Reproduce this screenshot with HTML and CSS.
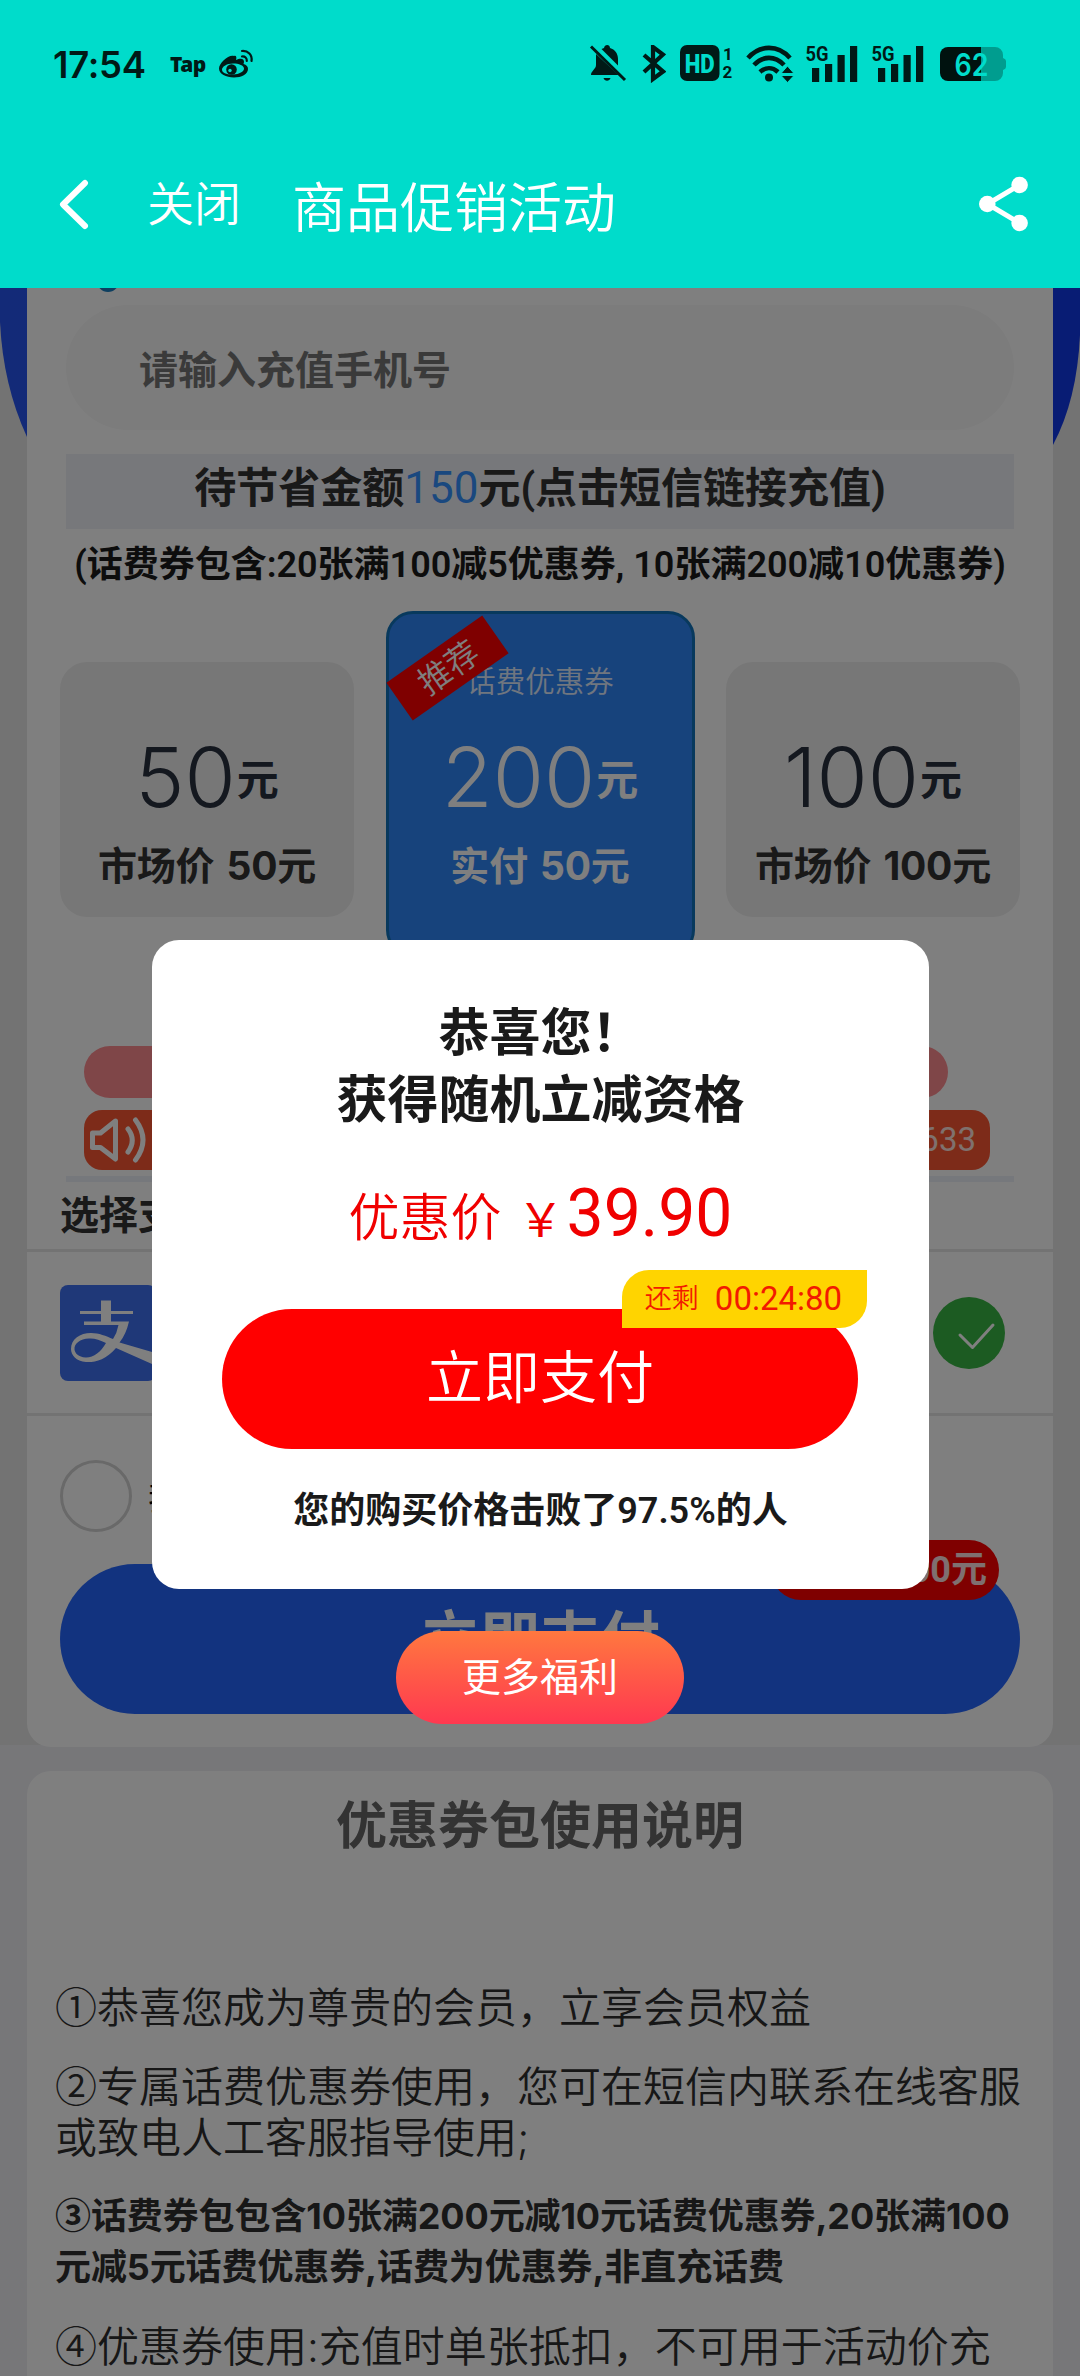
FILE: index.html
```html
<!DOCTYPE html>
<html lang="zh-CN">
<head>
<meta charset="utf-8">
<title>商品促销活动</title>
<link rel="stylesheet" href="styles.css">
</head>
<body>
<header class="top">
  <div class="status">
    <span class="clock">17:54</span>
    <span class="tap">Tap</span>
    <svg class="weibo" width="36" height="30" viewBox="217 50 36 30">
      <path fill="#001a17" fill-rule="evenodd" d="M233 57c2-1 3 1 2 4 4-2 8-2 8 2l-.5 2c3 1 4.500 2.500 4.500 5 0 5-6.500 8.500-14 8.500-8 0-15-3.500-15-9C218 64 228 55 233 57zM232 64.500c-6 0-11 3-11 6.200 0 3 4.500 5 11 4.800 6.500-.2 11-2.800 11-6 0-3-5-5-11-5z"/>
      <circle cx="230.500" cy="70.500" r="5.300" fill="#001a17"/><circle cx="229" cy="71.500" r="1.700" fill="#00dccb"/>
      <path fill="none" stroke="#001a17" stroke-width="2.200" stroke-linecap="round" d="M241 52c6-.5 10.500 4 9.500 10M241 57.500c3-.3 5 1.500 4.800 4.500"/>
    </svg>
    <svg class="icon bell" width="38" height="38" viewBox="588 46 38 38" fill="#001a17">
      <path d="M603 49c.5-4 6-4 6 0 5 1.500 8 5.500 8 11v6.500L600.500 50zM595 57v9c0 4-5 6-5 10h27.500L595 55z"/><path d="M602.500 79h7c-1 3.500-6 3.500-7 0z"/>
      <path stroke="#001a17" stroke-width="3" d="M590 47.500l34 33.500"/>
    </svg>
    <svg class="icon bt" width="24" height="38" viewBox="641 46 24 38" fill="none" stroke="#001a17" stroke-width="4.200">
      <path d="M643 56l19 16.500-10 7.500V48l10 7.500L643 73"/>
    </svg>
    <svg class="icon hd" width="54" height="38" viewBox="678 46 54 38">
      <rect x="679" y="46" width="39.500" height="36" rx="7" fill="#001a17"/>
      <text x="698.700" y="73.500" text-anchor="middle" class="t-hd" textLength="30" lengthAdjust="spacingAndGlyphs">HD</text>
      <text x="722" y="61" class="t-sim">1</text><text x="721.500" y="79" class="t-sim">2</text>
    </svg>
    <svg class="icon wifi" width="48" height="38" viewBox="745 46 48 38">
      <g fill="none" stroke="#001a17" stroke-width="4.600"><path d="M747 59c12-13.500 30-13.500 42 0M753 66c9-9.500 21-9.500 30 0M759 73c5.500-5 12.500-5 18 0"/></g>
      <circle cx="768" cy="78.500" r="4" fill="#001a17"/>
      <path d="M780 74.500h13l-6.500-7.500zM780 76.500h13l-6.500 7z" fill="#001a17" stroke="#00dccb" stroke-width="1"/>
    </svg>
    <svg class="icon sig" width="53" height="46" viewBox="804 41 53 46" fill="#001a17">
      <text x="804.500" y="60.500" class="t-5g" textLength="23" lengthAdjust="spacingAndGlyphs">5G</text>
      <path d="M811 68h7.200v14H811zM824 64h7.200v18H824zM836.500 55h7.200v27h-7.200zM849 46h7.200v36H849z"/>
    </svg>
    <svg class="icon sig2" width="53" height="46" viewBox="804 41 53 46" fill="#001a17">
      <text x="804.500" y="60.500" class="t-5g" textLength="23" lengthAdjust="spacingAndGlyphs">5G</text>
      <path d="M811 68h7.200v14H811zM824 64h7.200v18H824zM836.500 55h7.200v27h-7.200zM849 46h7.200v36H849z"/>
    </svg>
    <svg class="icon bat" width="67" height="38" viewBox="939 46 67 38">
      <path d="M980 48h14a8 8 0 0 1 8 8v3q3 1 3 3v6q0 2-3 3v3a8 8 0 0 1-8 8h-14z" fill="#009d8f"/>
      <path d="M947 48h33v34h-33a8 8 0 0 1-8-8V56a8 8 0 0 1 8-8z" fill="#00120f"/>
      <text x="970.500" y="77" text-anchor="middle" class="t-bat" textLength="34" lengthAdjust="spacingAndGlyphs">62</text>
    </svg>
  </div>
  <nav class="nav">
    <svg class="back" width="32" height="52" viewBox="58 178 32 52"><path d="M85 183L63 204.500 85 226" fill="none" stroke="#fff" stroke-width="6" stroke-linecap="round" stroke-linejoin="round"/></svg>
    <span class="close">关闭</span>
    <h1 class="nav-title">商品促销活动</h1>
    <svg class="share" width="52" height="56" viewBox="976 176 52 56" fill="#fff"><path d="M1018.600 185L986.500 204l32.100 19" fill="none" stroke="#fff" stroke-width="5"/><circle cx="986.300" cy="204" r="8.300"/><circle cx="1018.600" cy="185" r="8.300"/><circle cx="1018.600" cy="223" r="8.300"/></svg>
  </nav>
</header>

<main class="page">
  <svg class="hero" width="1080" height="170" viewBox="0 288 1080 170">
    <defs><linearGradient id="hero" x2="1"><stop offset="0" stop-color="#2755f0"/><stop offset="1" stop-color="#1038e8"/></linearGradient></defs>
    <path fill="url(#hero)" d="M0 288V322Q3 385 27 437L1053 445Q1077 400 1080 335V288z"/>
  </svg>
  <section class="card order">
    <i class="dot"></i>
    <div class="phone">请输入充值手机号</div>
    <div class="notice">待节省金额<em>150</em>元(点击短信链接充值)</div>
    <p class="note">(话费券包含:20张满100减5优惠券, 10张满200减10优惠券)</p>
    <div class="plans">
      <div class="plan side"><div class="amount"><b>50</b><span>元</span></div><div class="price">市场价 50元</div></div>
      <div class="plan main">
        <span class="ribbon">推荐</span>
        <div class="label">话费优惠券</div>
        <div class="amount"><b>200</b><span>元</span></div><div class="price">实付 50元</div>
      </div>
      <div class="plan side"><div class="amount"><b>100</b><span>元</span></div><div class="price">市场价 100元</div></div>
    </div>
    <div class="pink"></div>
    <div class="ticker">
      <svg width="60" height="48" viewBox="88 1115 60 48" fill="none" stroke="#fff" stroke-width="5" stroke-linecap="round" stroke-linejoin="round"><path d="M92.500 1132v14.500h8L115.500 1158v-38L100.500 1132zM128 1128q8.500 11 0 23M135.500 1119q15 20 0 40"/></svg>
      <span>633</span>
    </div>
    <div class="strip"></div>
    <h2 class="pay-head">选择支付方式</h2>
    <div class="pay-row">
      <svg width="96" height="96" viewBox="0 0 96 96"><rect width="96" height="96" rx="8" fill="#3e70f0"/>
        <path fill="#fff" d="M41 15.500h10V26h22v3H51v7.500h18q-3 13-9.500 21L92 67v12L56 63C46 75 35 77.500 26 77c-10-.5-15-7-15-13 0-10 9-16 20-16 8 0 15 3 22 6q4-6 5.500-14H24v-3.500h17V29H20v-3h21zM46 58c-6-3-12-5-17-4.500-9 .5-15 5-14.500 11 .5 4 4 7.500 11 8C33 73 41 67 46 58z"/></svg>
      <svg class="checked" width="72" height="72" viewBox="0 0 72 72"><circle cx="36" cy="36" r="36" fill="#38b644"/><path d="M27 38l12.500 12.500L60 28" fill="none" stroke="#fff" stroke-width="3" stroke-linecap="round" stroke-linejoin="round"/></svg>
    </div>
    <div class="agree"><i></i><span>我已阅读并同意</span></div>
    <div class="pay">立即支付<span class="badge">实付50.00元</span></div>
  </section>

  <section class="card guide">
    <h2>优惠券包使用说明</h2>
    <p><i>①</i>恭喜您成为尊贵的会员，立享会员权益</p>
    <p><i>②</i>专属话费优惠券使用，您可在短信内联系在线客服<br>或致电人工客服指导使用;</p>
    <p class="strong"><i>③</i>话费券包包含10张满200元减10元话费优惠券,20张满100<br>元减5元话费优惠券,话费为优惠券,非直充话费</p>
    <p><i>④</i>优惠券使用:充值时单张抵扣，不可用于活动价充</p>
  </section>

  <div class="mask">
    <div class="dialog">
      <h3>恭喜您！<br>获得随机立减资格</h3>
      <div class="deal"><span>优惠价</span><i>￥</i><b>39.90</b></div>
      <div class="go">立即支付<span class="timer"><small>还剩</small>00:24:80</span></div>
      <p>您的购买价格击败了97.5%的人</p>
    </div>
    <div class="more">更多福利</div>
  </div>
</main>
</body>
</html>
```
FILE: styles.css
```css
* { box-sizing: border-box; margin: 0; padding: 0; }
body {
  width: 1080px; height: 2376px; overflow: hidden;
  font-family: Inter, "Noto Sans CJK SC", sans-serif;
  font-weight: 400; color: #333;
}
svg { display: block; flex: none; }
i, em { font-style: normal; }

/* header */
.top { height: 288px; background: #00dccb; }
.status { height: 128px; display: flex; align-items: center; padding-left: 53px; color: #001a17; }
.clock { width: 117px; font-size: 36.5px; line-height: 40px; font-weight: 600; letter-spacing: -.3px; padding-top: 2px; }
.tap { width: 48px; font: 900 21px/24px "Noto Sans", sans-serif; letter-spacing: -.5px; }
.bell { margin-left: 335px; }
.bt { margin-left: 15px; }
.hd { margin-left: 13px; }
.wifi { margin-left: 13px; }
.sig { margin-left: 11px; }
.sig2 { margin-left: 13px; }
.bat { margin-left: 16px; }
.t-hd { font: 900 26px Roboto, sans-serif; fill: #00dccb; }
.t-sim { font: 700 17px Roboto, sans-serif; fill: #001a17; }
.t-5g { font: 700 20px Roboto, sans-serif; }
.t-bat { font: 600 31px Inter, sans-serif; fill: #00dccb; }
.nav { height: 152px; display: flex; align-items: center; padding-left: 58px; color: #fff; }
.close { width: 145px; margin: -7px 0 0 57px; font-size: 47px; font-weight: 350; }
.nav-title { width: 683px; margin-top: 0; font-size: 54px; font-weight: 350; }
.share { margin-left: 2px; }

/* page */
.page { position: relative; height: 2088px; overflow: hidden; background: linear-gradient(#e7e7e7 1457px, #eeeef3 1457px); }
.hero { position: absolute; left: 0; top: 0; }
.card { position: relative; width: 1026px; margin: 0 27px; padding: 0 39px; background: #fff; }
.order { height: 1459px; padding-top: 17px; border-radius: 0 0 24px 24px; }
.dot { position: absolute; left: 70px; top: -18px; width: 22px; height: 22px; border-radius: 50%; background: #1c7ec0; }
.phone { height: 125px; padding-left: 73px; border-radius: 63px; background: #f8f8f8; font-size: 39px; line-height: 129px; font-weight: 700; color: #757575; }
.notice { height: 75px; margin-top: 24px; background: #eff0f6; text-align: center; font: 700 42px/69px Roboto, "Noto Sans CJK SC", sans-serif; color: #333; white-space: nowrap; }
.notice em { font-size: 44px; font-weight: 400; color: #3490ff; }
.note { height: 70px; margin: 0 -20px; text-align: center; font: 600 36px/73px Roboto, "Noto Sans CJK SC", sans-serif; color: #1a1a1a; white-space: nowrap; }
.plans { display: flex; justify-content: space-between; align-items: flex-start; margin: 12px -6px 0; }
.plan { display: flex; flex-direction: column; align-items: center; border-radius: 27px; }
.side { width: 294px; height: 255px; margin-top: 51px; padding-top: 70px; background: #efefef; }
.main { position: relative; width: 309px; height: 346px; border: 3px solid #1173ba; background: #2e86f8; color: #fff; }
.label { height: 118px; padding-top: 46px; font-size: 29.5px; line-height: 43px; font-weight: 350; color: #e0ecff; }
.ribbon { position: absolute; left: 0; top: 31px; width: 117px; height: 46px; padding-left: 2px; background: #f00; font-size: 33px; line-height: 47px; font-weight: 350; text-align: center; transform: rotate(-35deg); }
.amount { height: 90px; display: flex; align-items: center; gap: 1px; color: #29303f; }
.amount b { font-size: 83px; line-height: 90px; font-weight: 350; }
.amount span { font-size: 42px; line-height: 60px; font-weight: 700; padding-top: 6px; }
.price { height: 90px; font-size: 39px; line-height: 88px; font-weight: 700; word-spacing: 3px; letter-spacing: -.2px; }
.main .amount { color: #fff; }
.pink { width: 864px; height: 52px; margin: 89px 0 0 18px; border-radius: 26px; background: #ff8c90; }
.ticker { width: 906px; height: 60px; margin: 12px 0 0 18px; padding: 0 14px 0 4px; border-radius: 18px; background: #fb5733; display: flex; align-items: center; justify-content: space-between; font: 400 33px/60px Roboto, sans-serif; color: #ffe3dd; }
.strip { height: 6px; margin-top: 6px; background: #edf1f8; }
.pay-head { height: 67px; margin-left: -6px; font-size: 39px; line-height: 66px; font-weight: 700; color: #333; }
.pay-row { height: 167px; margin: 0 -39px; padding: 0 48px 0 33px; border: solid #e6e6e6; border-width: 3px 0; display: flex; align-items: center; justify-content: space-between; }
.agree { height: 72px; margin: 44px -6px 0; display: flex; align-items: center; gap: 16px; font-size: 33px; color: #000; }
.agree i { width: 72px; height: 72px; border: 3px solid #d2d2d2; border-radius: 50%; }
.pay { position: relative; height: 150px; margin: 32px -6px 0; border-radius: 75px; background: #2466fe; color: #fff; text-align: center; font-size: 60px; line-height: 150px; font-weight: 700; }
.badge { position: absolute; right: 21px; top: -24px; width: 228px; height: 60px; padding-right: 12px; border-radius: 30px; background: #f00; font: 700 36px/61px Roboto, "Noto Sans CJK SC", sans-serif; text-align: right; white-space: nowrap; color: #ffe0e0; }

/* guide */
.guide { height: 700px; margin-top: 24px; padding: 0 28px; border-radius: 24px; color: #2e2e2e; }
.guide h2 { height: 211px; text-align: center; font-size: 51px; line-height: 110px; font-weight: 700; color: #666; }
.guide p { margin-bottom: 28px; font-size: 42px; line-height: 51px; font-weight: 350; white-space: nowrap; }
.guide i { font-family: "Noto Sans CJK SC", sans-serif; line-height: 1; }
.guide .strong { font-size: 36px; font-weight: 700; letter-spacing: -.1px; }

/* dialog */
.mask { position: absolute; inset: 0; background: rgba(0,0,0,.5); }
.dialog { position: absolute; left: 152px; top: 652px; width: 777px; height: 649px; padding: 59px 70px 0; border-radius: 27px; background: #fff; text-align: center; color: #1a1a1a; }
.dialog h3 { font-size: 51px; line-height: 67px; font-weight: 700; }
.deal { height: 90px; margin-top: 36px; display: flex; justify-content: center; align-items: baseline; font-family: Roboto, "Noto Sans CJK SC", sans-serif; line-height: 90px; color: #f00000; }
.deal span { font-size: 51px; font-weight: 350; }
.deal i { width: 48px; margin: 0 2px 0 15px; font-size: 46px; font-weight: 400; }
.deal b { font-size: 66px; font-weight: 400; }
.go { position: relative; width: 636px; height: 140px; margin: 50px 0 0; border-radius: 70px; background: #f00; color: #fff; font-size: 57px; line-height: 138px; font-weight: 350; }
.timer { position: absolute; right: -9px; top: -39px; width: 245px; height: 58px; padding-right: 2px; border-radius: 27px 0 27px 0; background: #ffd400; display: flex; align-items: center; justify-content: center; gap: 16px; font: 400 33px/58px Roboto, "Noto Sans CJK SC", sans-serif; color: #f21a00; }
.timer small { font-size: 27px; font-weight: 350; }
.dialog p { margin-top: 26px; font: 600 36px/72px Roboto, "Noto Sans CJK SC", sans-serif; white-space: nowrap; }
.more { position: absolute; left: 396px; top: 1343px; width: 288px; height: 93px; border-radius: 47px; background: linear-gradient(#ff783f, #ff3850); color: #fff; text-align: center; font-size: 39px; line-height: 92px; }
```
